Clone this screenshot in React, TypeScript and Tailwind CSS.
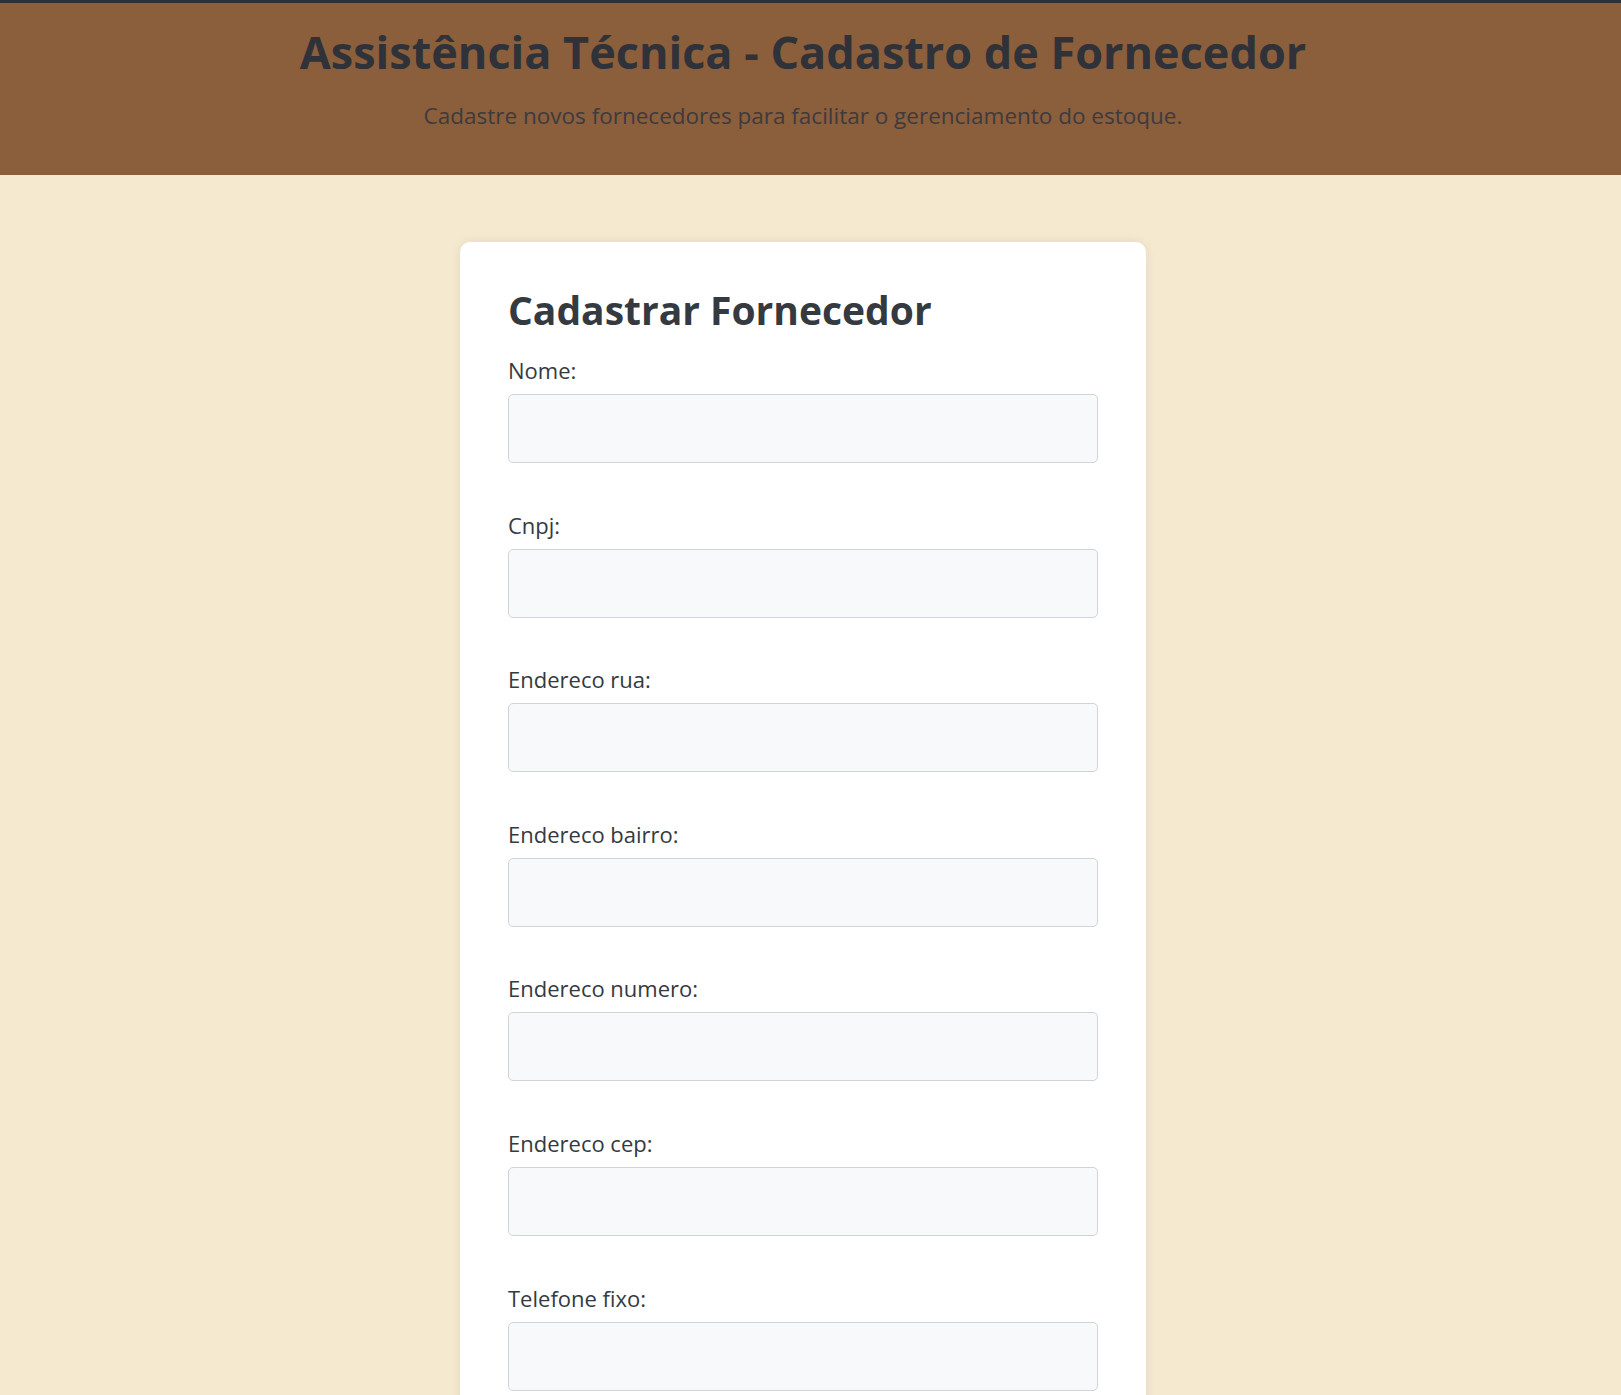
const fields = [
  'Nome:',
  'Cnpj:',
  'Endereco rua:',
  'Endereco bairro:',
  'Endereco numero:',
  'Endereco cep:',
  'Telefone fixo:',
  'Telefone celular:',
  'Email:',
]

export default function App() {
  return (
    <div className="min-h-screen bg-[#f5ead0] font-['Open_Sans',sans-serif] text-[#343a40]">
      {/* Header */}
      <header className="border-t-[3px] border-[#2e2f37] bg-[#8b5e3c] pt-[25px] pr-[15px] pb-[45px] text-center">
        <h1 className="text-[45px] leading-[48px] font-bold text-[#2f3238]">
          Assistência Técnica - Cadastro de Fornecedor
        </h1>
        <p className="mt-[25px] text-[22.5px] leading-[29px] text-[#3d3b3e]">
          Cadastre novos fornecedores para facilitar o gerenciamento do estoque.
        </p>
      </header>

      {/* Form card */}
      <main className="flex justify-center pt-[67px] pr-[15px] pb-16">
        <div className="w-[686px] rounded-[10px] bg-white px-12 pt-[46px] pb-12 shadow-[0_0_12px_rgba(0,0,0,0.08)]">
          <h2 className="mb-[25px] text-[39px] leading-[43px] font-bold text-[#343a40]">
            Cadastrar Fornecedor
          </h2>
          <form onSubmit={(e) => e.preventDefault()}>
            {fields.map((f, idx) => (
              <div key={idx} className="mb-[47.6px]">
                <label className="mb-[9px] block text-[22px] leading-[29px] text-[#343a40]">{f}</label>
                <input
                  type="text"
                  className="block h-[69px] w-full rounded-[5px] border border-[#ced4da] bg-[#f8f9fa] px-4 text-[18px] outline-none"
                />
              </div>
            ))}
            <button className="w-full rounded-[5px] bg-[#8b5e3c] py-4 text-[20px] font-bold text-white">
              Cadastrar
            </button>
          </form>
        </div>
      </main>
    </div>
  )
}
